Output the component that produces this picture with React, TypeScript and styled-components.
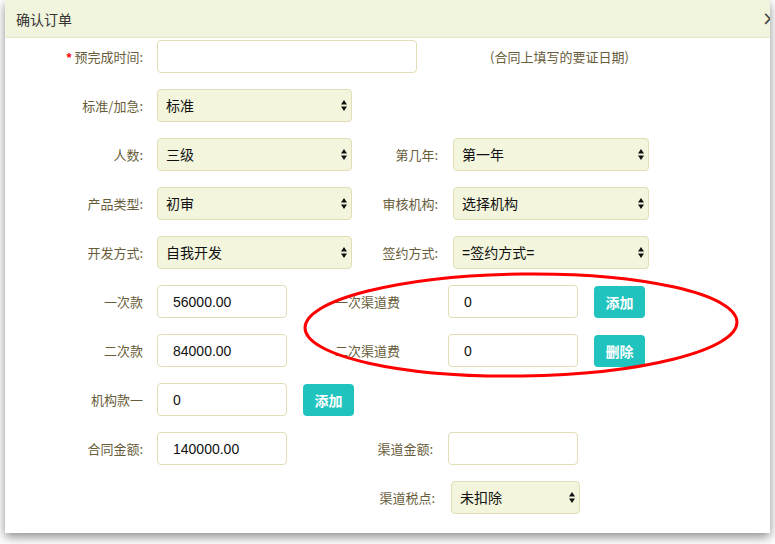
import React from "react";
import styled, { createGlobalStyle } from "styled-components";

const Global = createGlobalStyle`
  html, body { margin: 0; padding: 0; background: #ffffff; }
  body { font-family: "Liberation Sans", "Noto Sans CJK SC", sans-serif; }
  * { box-sizing: border-box; }
`;

const Page = styled.div`
  width: 775px;
  height: 544px;
  padding-left: 5px;
  overflow: hidden;
  background: #ffffff;
`;

const Modal = styled.div`
  position: relative;
  width: 765px;
  height: 533px;
  background: #ffffff;
  box-shadow: 0 4px 10px rgba(0, 0, 0, 0.45);
  overflow: hidden;
`;

const Header = styled.div`
  height: 38px;
  display: flex;
  align-items: center;
  justify-content: space-between;
  padding-left: 11px;
  background: #f2f5dd;
  border-bottom: 1px solid #e4e8c9;
`;

const Title = styled.div`
  font-size: 14px;
  color: #333333;
  font-family: "Noto Sans CJK SC", sans-serif;
`;

const Close = styled.div`
  font-size: 19px;
  color: #444;
  margin-right: -8px;
  line-height: 1;
  font-family: "DejaVu Sans", sans-serif;
`;

const Body = styled.div`
  display: flex;
  flex-direction: column;
  gap: 16px;
  padding-top: 2px;
`;

const Row = styled.div`
  display: flex;
  align-items: center;
  height: 33px;
`;

const Label = styled.div<{ $w: number; $ml?: number; $align?: string }>`
  width: ${(p) => p.$w}px;
  margin-left: ${(p) => p.$ml ?? 0}px;
  flex-shrink: 0;
  text-align: ${(p) => p.$align ?? "right"};
  font-size: 13px;
  color: #685d3b;
  font-family: "Noto Sans CJK SC", sans-serif;
  white-space: nowrap;
`;

const Req = styled.span`
  color: #ff0000;
  font-family: "Liberation Sans", sans-serif;
  font-weight: bold;
`;

const Input = styled.input<{ $w: number; $ml?: number }>`
  width: ${(p) => p.$w}px;
  height: 33px;
  margin-left: ${(p) => p.$ml ?? 14}px;
  flex-shrink: 0;
  border: 1px solid #e2ddb6;
  border-radius: 4px;
  background: #ffffff;
  padding: 0 0 0 15px;
  font-size: 14px;
  color: #111;
  font-family: "Liberation Sans", "Noto Sans CJK SC", sans-serif;
  outline: none;
`;

const SelectWrap = styled.div<{ $w: number; $ml?: number }>`
  position: relative;
  width: ${(p) => p.$w}px;
  height: 33px;
  margin-left: ${(p) => p.$ml ?? 14}px;
  flex-shrink: 0;
`;

const SelectBox = styled.select`
  appearance: none;
  -webkit-appearance: none;
  width: 100%;
  height: 100%;
  border: 1px solid #e2ddb6;
  border-radius: 4px;
  background: #f3f6dd;
  padding: 0 0 0 8px;
  font-size: 14px;
  color: #111;
  font-family: "Liberation Sans", "Noto Sans CJK SC", sans-serif;
  outline: none;
`;

const Arrows = styled.svg`
  position: absolute;
  right: 5px;
  top: 11px;
  pointer-events: none;
`;

const Hint = styled.div`
  margin-left: 73px;
  font-size: 13px;
  color: #685d3b;
  font-family: "Noto Sans CJK SC", sans-serif;
`;

const Button = styled.button<{ $ml?: number }>`
  width: 51px;
  height: 32px;
  margin-left: ${(p) => p.$ml ?? 16}px;
  flex-shrink: 0;
  border: none;
  border-radius: 4px;
  background: #20c3bd;
  color: #ffffff;
  font-size: 14px;
  font-weight: bold;
  font-family: "Noto Sans CJK SC", sans-serif;
  padding: 0;
`;

const Ellipse = styled.svg`
  position: absolute;
  left: 0;
  top: 0;
  pointer-events: none;
`;

function Select({ w, ml, value }: { w: number; ml?: number; value: string }) {
  return (
    <SelectWrap $w={w} $ml={ml}>
      <SelectBox defaultValue={value}>
        <option>{value}</option>
      </SelectBox>
      <Arrows width="6" height="11" viewBox="0 0 6 11">
        <path d="M3 0 L6 4.5 L0 4.5 Z" fill="#111" />
        <path d="M3 11 L6 6.5 L0 6.5 Z" fill="#111" />
      </Arrows>
    </SelectWrap>
  );
}

export default function App() {
  return (
    <>
      <Global />
      <Page>
        <Modal>
          <Header>
            <Title>确认订单</Title>
            <Close>×</Close>
          </Header>
          <Body>
            <Row>
              <Label $w={138}>
                <Req>*</Req> 预完成时间:
              </Label>
              <Input $w={260} defaultValue="" />
              <Hint>(合同上填写的要证日期)</Hint>
            </Row>
            <Row>
              <Label $w={138}>标准/加急:</Label>
              <Select w={195} value="标准" />
            </Row>
            <Row>
              <Label $w={138}>人数:</Label>
              <Select w={195} value="三级" />
              <Label $w={86}>第几年:</Label>
              <Select w={196} ml={15} value="第一年" />
            </Row>
            <Row>
              <Label $w={138}>产品类型:</Label>
              <Select w={195} value="初审" />
              <Label $w={86}>审核机构:</Label>
              <Select w={196} ml={15} value="选择机构" />
            </Row>
            <Row>
              <Label $w={138}>开发方式:</Label>
              <Select w={195} value="自我开发" />
              <Label $w={86}>签约方式:</Label>
              <Select w={196} ml={15} value="=签约方式=" />
            </Row>
            <Row>
              <Label $w={138}>一次款</Label>
              <Input $w={130} defaultValue="56000.00" />
              <Label $w={113} $ml={48} $align="left">一次渠道费</Label>
              <Input $w={130} $ml={0} defaultValue="0" />
              <Button>添加</Button>
            </Row>
            <Row>
              <Label $w={138}>二次款</Label>
              <Input $w={130} defaultValue="84000.00" />
              <Label $w={113} $ml={48} $align="left">二次渠道费</Label>
              <Input $w={130} $ml={0} defaultValue="0" />
              <Button>删除</Button>
            </Row>
            <Row>
              <Label $w={138}>机构款一</Label>
              <Input $w={130} defaultValue="0" />
              <Button>添加</Button>
            </Row>
            <Row>
              <Label $w={138}>合同金额:</Label>
              <Input $w={130} defaultValue="140000.00" />
              <Label $w={146}>渠道金额:</Label>
              <Input $w={130} $ml={15} defaultValue="" />
            </Row>
            <Row>
              <Label $w={430}>渠道税点:</Label>
              <Select w={129} ml={16} value="未扣除" />
            </Row>
          </Body>
          <Ellipse width="765" height="533" viewBox="0 0 765 533">
            <ellipse
              cx="516"
              cy="325"
              rx="216"
              ry="51"
              fill="none"
              stroke="#ff0000"
              strokeWidth="3"
              transform="rotate(-0.8 516 325)"
            />
          </Ellipse>
        </Modal>
      </Page>
    </>
  );
}
